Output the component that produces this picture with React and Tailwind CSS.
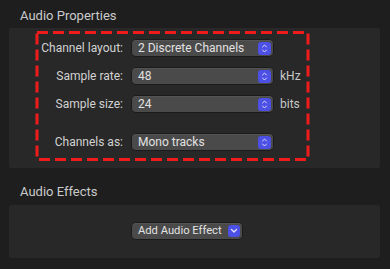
import React from "react";

const font = { fontFamily: "Roboto, 'Liberation Sans', sans-serif" };

function Stepper() {
  return (
    <div className="w-[13px] h-[13px] rounded-[3px] bg-[#4c50e4] flex items-center justify-center">
      <svg width="7" height="11" viewBox="0 0 7 11" fill="none" stroke="#d8daff" strokeWidth="1" strokeLinecap="round" strokeLinejoin="round">
        <path d="M1.5 4 L3.5 2 L5.5 4" />
        <path d="M1.5 7 L3.5 9 L5.5 7" />
      </svg>
    </div>
  );
}

function Popup({ value }) {
  return (
    <div className="w-[141px] h-[16px] rounded-[4px] bg-[#4a4a4a] shadow-[0_0_0_0.5px_rgba(0,0,0,0.6),inset_0_0.5px_0_rgba(255,255,255,0.12)] flex items-center justify-between pl-[6px] pr-[2px]">
      <span className="text-[12px] leading-none text-[#e2e2e2]">{value}</span>
      <Stepper />
    </div>
  );
}

function Row({ label, value, unit, className = "" }) {
  return (
    <div className={"flex items-center h-[16px] " + className}>
      <div className="w-[114px] text-right text-[12px] leading-none text-[#d2d2d2]">{label}</div>
      <div className="ml-[9px]">
        <Popup value={value} />
      </div>
      {unit && <div className="ml-[7px] text-[12px] leading-none text-[#c8c8c8]">{unit}</div>}
    </div>
  );
}

export default function App() {
  return (
    <div className="relative w-[390px] h-[269px] bg-[#1e1e1e] overflow-hidden" style={font}>
      <div className="pl-[20px] pt-[8px] h-[28px] text-[13px] leading-[16px] text-[#cacaca]">Audio Properties</div>
      <div className="ml-[9px] w-[371px] h-[140px] bg-[#282828] rounded-[2px] pt-[12px] flex flex-col">
        <Row label="Channel layout:" value="2 Discrete Channels" />
        <Row label="Sample rate:" value="48" unit="kHz" className="mt-[12px]" />
        <Row label="Sample size:" value="24" unit="bits" className="mt-[12px]" />
        <Row label="Channels as:" value="Mono tracks" className="mt-[22px]" />
      </div>
      <div className="pl-[20px] mt-[16px] h-[16px] mb-[5px] text-[13px] leading-[16px] text-[#cacaca]">Audio Effects</div>
      <div className="ml-[9px] w-[371px] h-[53px] bg-[#282828] rounded-[2px] pt-[18px]">
        <div className="ml-[123px] w-[110px] h-[16px] rounded-[4px] bg-[#4a4a4a] shadow-[0_0_0_0.5px_rgba(0,0,0,0.6),inset_0_0.5px_0_rgba(255,255,255,0.12)] flex items-center justify-between pl-[6px] pr-[2px]">
          <span className="text-[11.2px] leading-none text-[#e2e2e2]">Add Audio Effect</span>
          <div className="w-[12px] h-[12px] rounded-[3px] bg-[#4c50e4] flex items-center justify-center">
            <svg width="8" height="6" viewBox="0 0 8 6" fill="none" stroke="#e0e2ff" strokeWidth="1.3" strokeLinecap="round" strokeLinejoin="round">
              <path d="M1.5 1.5 L4 4 L6.5 1.5" />
            </svg>
          </div>
        </div>
      </div>
      <svg className="absolute left-[35px] top-[31px]" width="275" height="130" viewBox="0 0 275 130" fill="none">
        <rect x="2" y="1.5" width="271" height="127" stroke="#f01c1c" strokeWidth="3" strokeDasharray="11 5" />
      </svg>
    </div>
  );
}
